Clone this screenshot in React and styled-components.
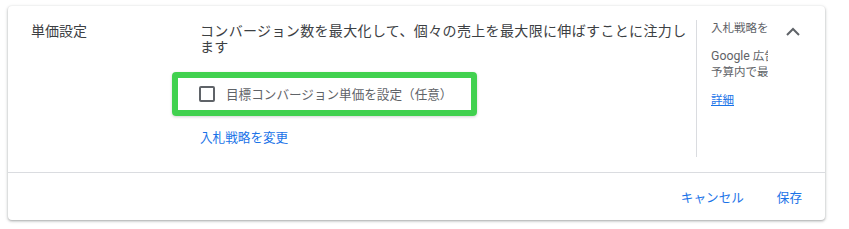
import React from 'react';
import styled, { createGlobalStyle } from 'styled-components';

const GlobalStyle = createGlobalStyle`
  body {
    margin: 0;
    background: #fff;
    font-family: Roboto, "Noto Sans CJK JP", sans-serif;
  }
`;

const Page = styled.div`
  padding: 6px 24px 10px 8px;
`;

const Card = styled.section`
  width: 817px;
  background: #fff;
  border-radius: 4px;
  box-shadow: 0 1px 2px 0 rgba(60, 64, 67, 0.3), 0 1px 3px 1px rgba(60, 64, 67, 0.15);
`;

const Body = styled.div`
  display: flex;
  height: 166px;
`;

const Label = styled.div`
  width: 192px;
  box-sizing: border-box;
  padding: 17px 0 0 23px;
  font-size: 14px;
  line-height: 16px;
  color: #3c4043;
`;

const Main = styled.div`
  width: 496px;
  padding-top: 17px;
  display: flex;
  flex-direction: column;
  align-items: flex-start;
`;

const Description = styled.p`
  margin: 0;
  font-size: 14px;
  line-height: 16px;
  letter-spacing: 0.35px;
  color: #3c4043;
`;

const Highlight = styled.label`
  margin: 17px 0 0 -28px;
  width: 305px;
  height: 44px;
  box-sizing: border-box;
  border: 6px solid #41d14f;
  border-radius: 4px;
  box-shadow: 0 1px 3px rgba(0, 0, 0, 0.18);
  display: flex;
  align-items: center;
  gap: 11px;
  padding: 0 0 1px 21px;
  font-size: 12.6px;
  color: #5f6368;
  cursor: pointer;
`;

const Box = styled.span`
  width: 16px;
  height: 16px;
  box-sizing: border-box;
  border: 2px solid #5f6368;
  border-radius: 2px;
  flex-shrink: 0;
`;

const Link = styled.a`
  margin-top: ${(p) => (p.$flush ? '0' : '14px')};
  font-size: ${(p) => (p.$small ? '11.5px' : '12.6px')};
  line-height: 16px;
  color: #1a73e8;
  text-decoration: ${(p) => (p.$underline ? 'underline' : 'none')};
  cursor: pointer;
`;

const Divider = styled.div`
  width: 1px;
  background: #dadce0;
  margin: 14px 0 15px;
`;

const Side = styled.aside`
  width: 71px;
  box-sizing: border-box;
  padding: 14px 0 0 14px;
  overflow: hidden;
  white-space: nowrap;
  font-size: 11.5px;
  line-height: 16px;
  color: #5f6368;

  p {
    margin: 0 0 12px;
  }
`;

const Latin = styled.span`
  font-size: 12.3px;
`;

const Toggle = styled.button`
  align-self: flex-start;
  margin: 21px 0 0 18px;
  padding: 0;
  border: none;
  background: none;
  display: flex;
  cursor: pointer;
`;

const Footer = styled.footer`
  border-top: 1px solid #dadce0;
  height: 46px;
  display: flex;
  align-items: center;
  justify-content: flex-end;
  gap: 33px;
  padding-right: 23px;
  padding-bottom: 1px;
`;

const TextButton = styled.button`
  border: none;
  background: none;
  padding: 0;
  font-family: inherit;
  font-size: 12.6px;
  color: #1a73e8;
  cursor: pointer;
`;

export default function App() {
  return (
    <Page>
      <GlobalStyle />
      <Card>
        <Body>
          <Label>単価設定</Label>
          <Main>
            <Description>
              コンバージョン数を最大化して、個々の売上を最大限に伸ばすことに注力します
            </Description>
            <Highlight>
              <Box />
              目標コンバージョン単価を設定（任意）
            </Highlight>
            <Link>入札戦略を変更</Link>
          </Main>
          <Divider />
          <Side>
            <p>入札戦略を選択</p>
            <p>
              <Latin>Google</Latin> 広告
              <br />
              予算内で最大
            </p>
            <Link as="span" $underline $flush $small>
              詳細
            </Link>
          </Side>
          <Toggle aria-label="折りたたむ">
            <svg width="14" height="9" viewBox="0 0 14 9">
              <polyline points="1,8 7,2 13,8" fill="none" stroke="#5f6368" strokeWidth="2" />
            </svg>
          </Toggle>
        </Body>
        <Footer>
          <TextButton>キャンセル</TextButton>
          <TextButton>保存</TextButton>
        </Footer>
      </Card>
    </Page>
  );
}
